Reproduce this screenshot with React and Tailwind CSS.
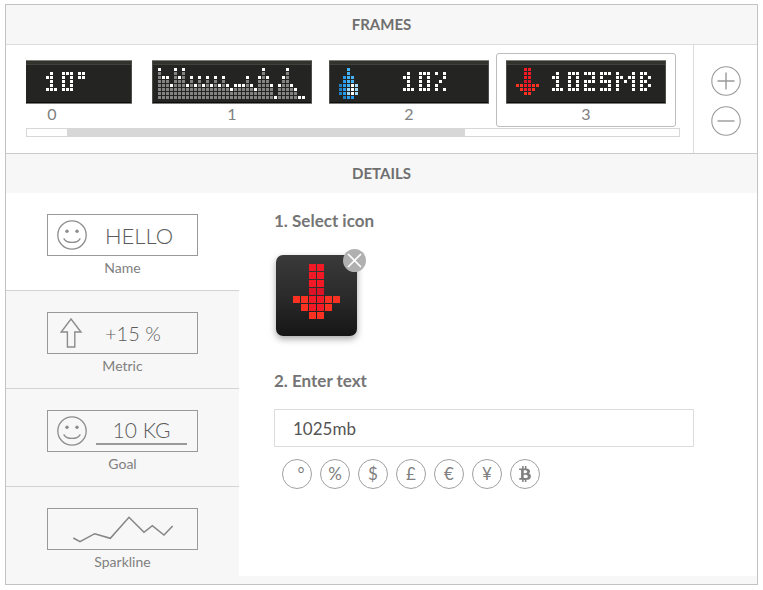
import { useState } from "react";
import { FaBtc } from "react-icons/fa";

const GLYPHS = {
  "0": ["###", "#.#", "#.#", "#.#", "###"],
  "1": [".#.", "##.", ".#.", ".#.", "###"],
  "2": ["###", "..#", "###", "#..", "###"],
  "5": ["###", "#..", "###", "..#", "###"],
  '"': ["##", "##", "..", "..", ".."],
  "%": ["#.#", "..#", ".#.", "#..", "#.#"],
  M: ["#...#", "##.##", "#.#.#", "#...#", "#...#"],
  B: ["##.", "#.#", "##.", "#.#", "##."],
};

const ARROW = [
  "..rr....",
  "..rr....",
  "..rr....",
  "..dd....",
  "oorroo..",
  ".orro...",
  "..oo....",
];

const DROP = [
  "..b..",
  "..b..",
  ".mbb.",
  ".mbb.",
  "dmbwl",
  "dmlwl",
  "dmlwl",
  ".dmm.",
];

const ARROW_COLORS = { r: "#f31a26", d: "#dc1326", o: "#fb3221" };
const DROP_COLORS = { b: "#45b3f7", m: "#2a9df0", d: "#1f80c4", w: "#ffffff", l: "#a3dafb" };

const LEVELS = [
  0, 2, 2, 4, 0, 2, 0, 4, 2, 4, 2, 4, 2, 4, 2, 4, 2, 4, 5, 4, 4, 4, 2, 4, 5, 2, 0, 2, 4, 7, 4, 2, 0,
  4, 5, 7, 7,
];

function textDots(text, startCol) {
  const dots = [];
  let col = startCol;
  for (const ch of text) {
    GLYPHS[ch].forEach((line, r) => {
      [...line].forEach((c, i) => {
        if (c === "#") dots.push([col + i, r + 1, "#ffffff"]);
      });
    });
    col += GLYPHS[ch][0].length + 1;
  }
  return dots;
}

function spriteDots(sprite, colors, startCol) {
  return sprite.flatMap((line, r) =>
    [...line].flatMap((c, i) => (colors[c] ? [[startCol + i, r, colors[c]]] : []))
  );
}

// The arrow is six dots wide: the shaft sits on its two middle columns.
function arrowDots(startCol) {
  return spriteDots(ARROW, ARROW_COLORS, startCol);
}

function chartDots() {
  return LEVELS.flatMap((top, col) => {
    const dots = [[col, top, "#ffffff"]];
    for (let r = top + 1; r < 8; r++) dots.push([col, r, "#848484"]);
    return dots;
  });
}

const FRAMES = [
  { id: 0, label: '10"', dots: textDots('10"', 17) },
  { id: 1, label: "Sparkline", dots: chartDots() },
  { id: 2, label: "10%", dots: [...spriteDots(DROP, DROP_COLORS, 1), ...textDots("10%", 17)] },
  { id: 3, label: "1025MB", dots: [...arrowDots(1), ...textDots("1025MB", 10)] },
];

function LedDisplay({ dots }) {
  return (
    <svg viewBox="0 0 160 44" className="block h-11 w-40" shapeRendering="crispEdges" aria-hidden="true">
      <rect width="160" height="44" fill="#242422" />
      <rect width="160" height="5" fill="#32332d" />
      <rect y="4" width="160" height="1" fill="#40413a" />
      <rect width="160" height="1" fill="#7e7e79" />
      <rect y="42" width="160" height="1" fill="#0d0d0c" />
      <rect y="43" width="160" height="1" fill="#7c7c7a" />
      <rect y="1" width="1" height="42" fill="#4c4c49" />
      <rect x="159" y="1" width="1" height="42" fill="#4c4c49" />
      {dots.map(([c, r, color]) => (
        <rect key={`${c}-${r}`} x={6 + c * 4} y={8 + r * 4} width="3" height="3" fill={color} />
      ))}
    </svg>
  );
}

function SectionTitle({ children }) {
  return (
    <h2 className="flex h-[39px] items-center justify-center bg-[#f7f7f7] text-[15px] font-bold text-[#6f6f6f]">
      {children}
    </h2>
  );
}

function Smiley() {
  return (
    <svg viewBox="0 0 30 30" className="size-[30px]" fill="none" stroke="#8c8c8c" strokeWidth="1.3" aria-hidden="true">
      <circle cx="15" cy="15" r="14.2" />
      <circle cx="10" cy="11.2" r="1.7" fill="#8c8c8c" stroke="none" />
      <circle cx="20" cy="11.2" r="1.7" fill="#8c8c8c" stroke="none" />
      <path d="M7 18.8 C10 23.6 20 23.6 23 18.8" strokeLinecap="round" />
    </svg>
  );
}

function UpArrow() {
  return (
    <svg viewBox="0 0 30 30" className="size-[30px]" fill="none" stroke="#8c8c8c" strokeWidth="1.4" aria-hidden="true">
      <path d="M14 1 L24 14 H17.8 V29 H10.4 V14 H4.2 Z" />
    </svg>
  );
}

const KINDS = [
  {
    name: "Name",
    art: (
      <>
        <Smiley />
        <span className="ml-[18px] text-[22px]">HELLO</span>
      </>
    ),
  },
  {
    name: "Metric",
    art: (
      <>
        <UpArrow />
        <span className="ml-[18px] text-xl">+15 %</span>
      </>
    ),
  },
  {
    name: "Goal",
    art: (
      <>
        <Smiley />
        <span className="ml-[9px] w-[91px] border-b-2 border-[#999] text-center text-[21px] leading-[26px]">
          10 KG
        </span>
      </>
    ),
  },
  {
    name: "Sparkline",
    art: (
      <svg viewBox="0 0 130 40" className="h-10 w-[130px]" fill="none" stroke="#858585" strokeWidth="1.5" aria-hidden="true">
        <path d="M16.3 29 L23 32.7 L37.7 24.7 L53.3 29.3 L72 8.3 L87 23.3 L95.3 16.7 L107 26 L115.7 17" />
      </svg>
    ),
  },
];

const SYMBOLS = [
  { name: "Degree", char: "°", glyph: <span className="pl-2">°</span> },
  { name: "Percent", char: "%", glyph: "%" },
  { name: "Dollar", char: "$", glyph: "$" },
  { name: "Pound", char: "£", glyph: "£" },
  { name: "Euro", char: "€", glyph: "€" },
  { name: "Yen", char: "¥", glyph: "¥" },
  { name: "Bitcoin", char: "₿", glyph: <FaBtc className="size-4" /> },
];

function RoundButton({ label, d }) {
  return (
    <button type="button" aria-label={label} className="size-[30px]">
      <svg viewBox="0 0 30 30" className="size-[30px]" fill="none" stroke="#999" aria-hidden="true">
        <circle cx="15" cy="15" r="14.2" strokeWidth="1.1" />
        <path d={d} strokeWidth="1.4" />
      </svg>
    </button>
  );
}

export default function App() {
  const [selected, setSelected] = useState(3);
  const [kind, setKind] = useState("Name");
  const [text, setText] = useState("1025mb");

  return (
    <main className="mx-[5px] mt-1 border border-[#c3c3c3] bg-[#f7f7f7] font-[Lato,sans-serif] text-[#808080]">
      <section className="border-b border-[#cbcbcb]">
        <SectionTitle>FRAMES</SectionTitle>
        <div className="flex border-t border-[#dcdcdc] bg-white">
          <div className="min-w-0 flex-1 pt-2 pr-[13px] pb-4 pl-5">
            <div className="overflow-hidden">
              <ol className="-ml-[54px] flex gap-[17px]">
                {FRAMES.map((f) => (
                  <li key={f.id} className="w-40 shrink-0 first:mr-[3px]">
                    <button
                      type="button"
                      aria-label={`Frame ${f.id}: ${f.label}`}
                      onClick={() => setSelected(f.id)}
                      className={`-mx-2.5 block rounded-[3px] border px-[9px] pt-1.5 pb-0.5 ${
                        selected === f.id ? "border-[#bdbdbd]" : "border-transparent"
                      }`}
                    >
                      <LedDisplay dots={f.dots} />
                      <span className="block text-center text-base leading-5">{f.id}</span>
                    </button>
                  </li>
                ))}
              </ol>
            </div>
            <div className="mt-px h-[9px] border border-[#d7d7d7]">
              <div className="ml-10 h-full w-[61%] bg-[#d7d7d7]" />
            </div>
          </div>
          <div className="flex w-16 flex-col items-center gap-2.5 border-l border-[#dcdcdc] pt-[21px]">
            <RoundButton label="Add frame" d="M15 6.5 V23.5 M6.5 15 H23.5" />
            <RoundButton label="Remove frame" d="M6.5 15 H23.5" />
          </div>
        </div>
      </section>

      <section>
        <SectionTitle>DETAILS</SectionTitle>
        <div className="flex">
          <ul className="w-[233px] shrink-0">
            {KINDS.map((k) => (
              <li key={k.name} className="border-b border-[#d3d3d3] last:border-b-0">
                <button
                  type="button"
                  onClick={() => setKind(k.name)}
                  className={`flex w-full flex-col items-center pt-[21px] pb-2.5 ${kind === k.name ? "bg-white" : ""}`}
                >
                  <span className="flex h-[42px] w-[151px] items-center border border-[#999] pl-[9px] font-light text-[#5c5c5c]">
                    {k.art}
                  </span>
                  <span className="text-sm leading-6">{k.name}</span>
                </button>
              </li>
            ))}
          </ul>
          <div className="mb-2 min-w-0 flex-1 bg-white pt-4 pr-[63px] pl-[35px]">
            <h3 className="text-[17px] leading-6 font-bold text-[#757575]">1. Select icon</h3>
            <div className="relative mt-[22px] ml-0.5 size-[81px]">
              <button
                type="button"
                aria-label="Choose icon"
                className="block size-full rounded-[7px] bg-linear-to-b from-[#3a3a3a] via-[#2b2b2b] to-[#161616] shadow-[0_3px_7px_rgba(0,0,0,0.35)]"
              >
                <svg viewBox="0 0 81 81" className="size-full" shapeRendering="crispEdges" aria-hidden="true">
                  {arrowDots(1).map(([c, r, color]) => (
                    <rect key={`${c}-${r}`} x={9 + c * 8} y={9 + r * 8} width="7" height="7" fill={color} />
                  ))}
                </svg>
              </button>
              <button
                type="button"
                aria-label="Remove icon"
                className="absolute -top-1.5 -right-[9px] size-[23px] rounded-full bg-[#b0b0b0]"
              >
                <svg viewBox="0 0 23 23" className="size-[23px]" stroke="#fff" strokeWidth="1.7" aria-hidden="true">
                  <path d="M5 5 L18 18 M18 5 L5 18" />
                </svg>
              </button>
            </div>
            <label htmlFor="frame-text" className="mt-[33px] block text-[17px] leading-6 font-bold text-[#757575]">
              2. Enter text
            </label>
            <input
              id="frame-text"
              value={text}
              onChange={(e) => setText(e.target.value)}
              className="mt-4 block h-[38px] w-full border border-[#dcdcdc] bg-white px-[18px] text-[17px] text-[#555] outline-none"
            />
            <div className="mt-3 flex gap-2 pl-2">
              {SYMBOLS.map((s) => (
                <button
                  key={s.name}
                  type="button"
                  aria-label={s.name}
                  onClick={() => setText(text + s.char)}
                  className="flex size-[30px] items-center justify-center rounded-full border border-[#a0a0a0] text-[17px] leading-6"
                >
                  {s.glyph}
                </button>
              ))}
            </div>
          </div>
        </div>
      </section>
    </main>
  );
}
